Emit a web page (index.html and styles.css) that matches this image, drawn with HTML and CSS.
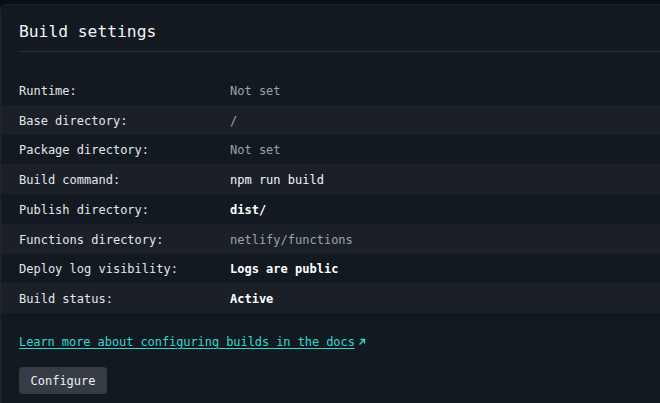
FILE: index.html
```html
<!DOCTYPE html>
<html>
<head>
<meta charset="utf-8">
<link rel="stylesheet" href="styles.css">
</head>
<body>
<section class="card">
  <h2 class="card-title">Build settings</h2>
  <dl class="settings">
    <div class="row"><dt>Runtime:</dt><dd class="muted">Not set</dd></div>
    <div class="row alt"><dt>Base directory:</dt><dd class="muted">/</dd></div>
    <div class="row"><dt>Package directory:</dt><dd class="muted">Not set</dd></div>
    <div class="row alt"><dt>Build command:</dt><dd>npm run build</dd></div>
    <div class="row"><dt>Publish directory:</dt><dd class="strong">dist/</dd></div>
    <div class="row alt"><dt>Functions directory:</dt><dd class="muted">netlify/functions</dd></div>
    <div class="row"><dt>Deploy log visibility:</dt><dd class="strong">Logs are public</dd></div>
    <div class="row alt"><dt>Build status:</dt><dd class="strong">Active</dd></div>
  </dl>
  <p class="docs"><a href="#" class="docs-link">Learn more about configuring builds in the docs</a><svg class="ext" width="8" height="8" viewBox="0 0 8 8"><path d="M1.5 6.5 L6.2 1.8 M2.5 1.5 H6.5 V5.5" fill="none" stroke="#32d7d2" stroke-width="1.4"/></svg></p>
  <button class="btn">Configure</button>
</section>
</body>
</html>
```
FILE: styles.css
```css
html, body {
  margin: 0;
  padding: 0;
  background: #0a0e13;
  overflow: hidden;
}
body {
  font-family: "DejaVu Sans Mono", "Liberation Mono", monospace;
  font-size: 12px;
  color: #e3e7eb;
  padding-top: 4px;
  height: 399px;
}
.card {
  background: #131920;
  border-left: 1px solid #1e252d;
  border-top: 1px solid #1a2028;
  border-top-left-radius: 6px;
  box-sizing: border-box;
  width: calc(100% + 20px);
  height: 399px;
}
.card-title {
  margin: 0 0 0 18px;
  padding: 15px 0 7px;
  font-size: 16.3px;
  line-height: 24px;
  font-weight: normal;
  color: #f2f4f6;
  border-bottom: 1px solid #2c333c;
}
.settings {
  margin: 23px 0 0;
  padding: 0;
}
.row {
  display: flex;
  box-sizing: border-box;
  height: 29.75px;
  align-items: center;
  padding: 2px 0 0 18px;
}
.row.alt {
  background: #1b2028;
}
.row dt {
  width: 211px;
  margin: 0;
  color: #e3e7eb;
}
.row dd {
  margin: 0;
  color: #f4f6f8;
}
.row dd.muted {
  color: #9aa4ae;
}
.row dd.strong {
  color: #ffffff;
  font-weight: bold;
}
.docs {
  margin: 21px 0 0 18px;
  line-height: 17px;
  display: flex;
  align-items: center;
  gap: 3px;
}
.docs-link {
  color: #32d7d2;
  letter-spacing: -0.08px;
  text-decoration: underline;
  text-underline-offset: 2px;
}
.ext {
  margin-top: -2px;
}
.btn {
  display: block;
  margin: 16px 0 0 18px;
  width: 88px;
  height: 27px;
  border: none;
  border-radius: 4px;
  background: #363c44;
  color: #eef1f4;
  font-family: "DejaVu Sans Mono", "Liberation Mono", monospace;
  font-size: 12px;
  padding: 0;
}
```
